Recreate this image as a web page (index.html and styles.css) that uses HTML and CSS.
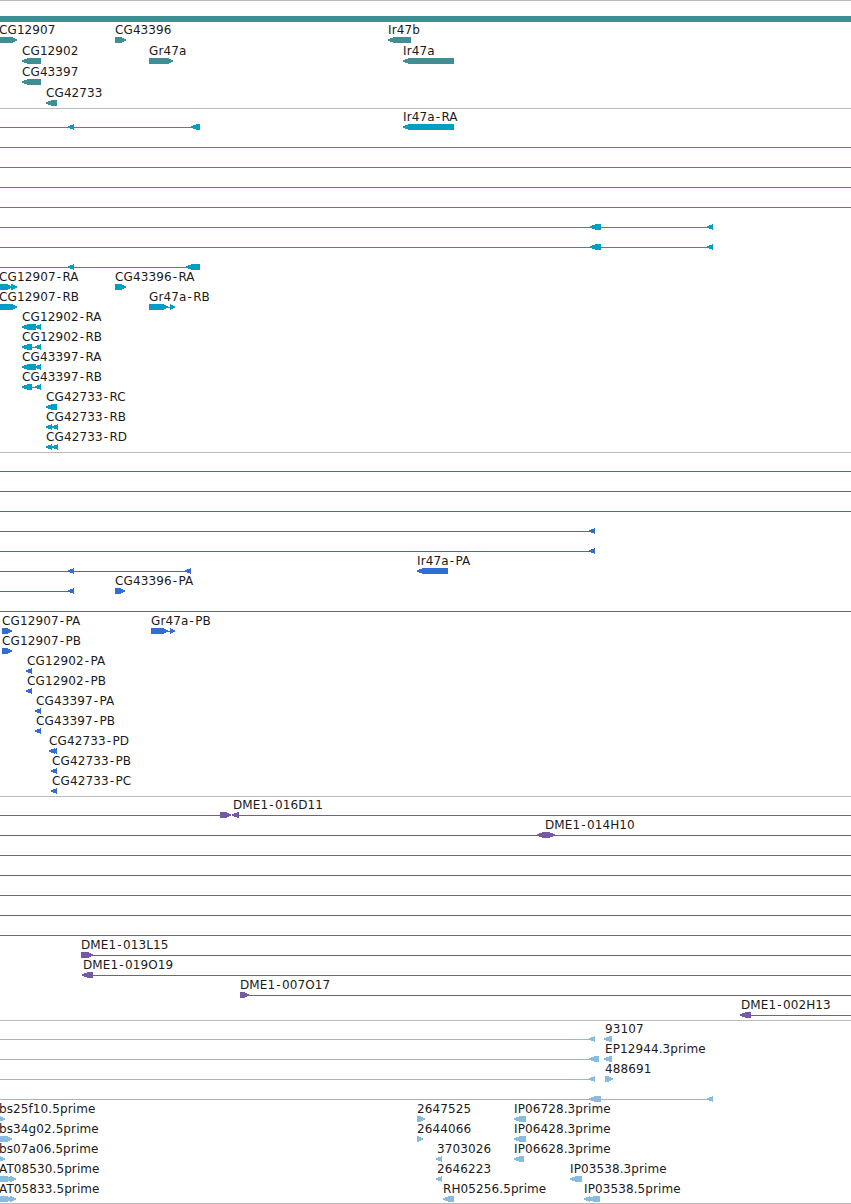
FILE: index.html
```
<!DOCTYPE html>
<html>
  <head>
    <meta charset="utf-8">
    <title>Genome browser</title>
    <link rel="stylesheet" href="styles.css">
  </head>
  <body>
    <main>
      <section class="track genes" id="genes">
        <div class="contig"></div>
      </section>
      <section class="track transcripts" id="transcripts"></section>
      <section class="track proteins" id="proteins"></section>
      <section class="track bacs" id="bacs"></section>
      <section class="track ests" id="ests"></section>
    </main>
    <script src="tracks.js"></script>
  </body>
</html>
```
FILE: styles.css
```
* {
  margin: 0;
  padding: 0;
  box-sizing: border-box;
}
body {
  background-color: white;
  overflow: hidden;
}
main {
  width: 851px;
  height: 1204px;
  border-bottom: 1px solid #bbb;
}
.track {
  display: flex;
  flex-direction: column;
  border-top: 1px solid #bbb;
  padding: 2px 0 1px;
}
.genes {
  color: #3e8e93;
  padding: 15px 0 0;
}
.transcripts {
  color: #009ec0;
}
.proteins {
  color: #316ecf;
}
.bacs {
  color: #7459a8;
}
.ests {
  color: #88bcde;
  padding-bottom: 0;
}
.contig {
  height: 6px;
  margin-bottom: 2px;
  background-color: currentColor;
}
.row {
  display: block;
  width: 851px;
  height: 20px;
  overflow: visible;
}
.genes .row {
  height: 21px;
}
.row path,
.row rect {
  fill: currentColor;
  shape-rendering: crispEdges;
}
.row text {
  fill: #1a1a1a;
  font-family: "DejaVu Sans", sans-serif;
  font-size: 12px;
  letter-spacing: 0.1px;
}
```
FILE: tracks.js
```
const NS = "http://www.w3.org/2000/svg";
const WIDTH = 851;

// one array per row
// ["-", from, to] line, ["<", from, to] / [">", from, to] / ["<>", from, to] arrow,
// ["t", x, label]
const full = [["-", 0, WIDTH]];

const tracks = {
  genes: [
    [["t", -1, "CG12907"], [">", 0, 17], ["t", 115, "CG43396"], [">", 115, 126], ["t", 388, "Ir47b"], ["<", 388, 411]],
    [["t", 22, "CG12902"], ["<", 22, 41], ["t", 149, "Gr47a"], [">", 149, 173], ["t", 403, "Ir47a"], ["<", 403, 454]],
    [["t", 22, "CG43397"], ["<", 22, 41]],
    [["t", 46, "CG42733"], ["<", 46, 57]],
  ],
  transcripts: [
    [["-", 0, 195], ["<", 68, 74], ["<", 191, 200], ["t", 403, "Ir47a-RA"], ["<", 403, 454]],
    full,
    full,
    full,
    full,
    [["-", 0, 710], ["<", 590, 601], ["<", 707, 713]],
    [["-", 0, 710], ["<", 590, 601], ["<", 707, 713]],
    [["-", 0, 190], ["<", 68, 74], ["<", 186, 200]],
    [["t", -1, "CG12907-RA"], [">", 0, 12], [">", 11, 17], ["t", 115, "CG43396-RA"], [">", 115, 126]],
    [["t", -1, "CG12907-RB"], [">", 0, 17], ["t", 149, "Gr47a-RB"], [">", 149, 168], ["-", 165, 172], [">", 170, 175]],
    [["t", 22, "CG12902-RA"], ["<", 22, 36], ["<", 35, 41]],
    [["t", 22, "CG12902-RB"], ["<", 22, 32], ["-", 32, 36], ["<", 35, 41]],
    [["t", 22, "CG43397-RA"], ["<", 22, 36], ["<", 35, 41]],
    [["t", 22, "CG43397-RB"], ["<", 22, 32], ["-", 32, 36], ["<", 35, 41]],
    [["t", 46, "CG42733-RC"], ["<", 46, 57]],
    [["t", 46, "CG42733-RB"], ["<", 46, 52], ["<", 52, 58]],
    [["t", 46, "CG42733-RD"], ["<", 46, 52], ["<", 52, 58]],
  ],
  proteins: [
    full,
    full,
    full,
    [["-", 0, 592], ["<", 589, 595]],
    [["-", 0, 592], ["<", 589, 595]],
    [["-", 0, 188], ["<", 68, 74], ["<", 185, 191], ["t", 417, "Ir47a-PA"], ["<", 417, 448]],
    [["-", 0, 71], ["<", 68, 74], ["t", 115, "CG43396-PA"], [">", 115, 125]],
    full,
    [["t", 2, "CG12907-PA"], [">", 2, 12], ["t", 151, "Gr47a-PB"], [">", 151, 168], ["-", 165, 172], [">", 170, 175]],
    [["t", 2, "CG12907-PB"], [">", 2, 12]],
    [["t", 27, "CG12902-PA"], ["<", 26, 32]],
    [["t", 27, "CG12902-PB"], ["<", 26, 32]],
    [["t", 36, "CG43397-PA"], ["<", 35, 41]],
    [["t", 36, "CG43397-PB"], ["<", 35, 41]],
    [["t", 49, "CG42733-PD"], ["<", 49, 55], ["<", 52, 57]],
    [["t", 52, "CG42733-PB"], ["<", 51, 57]],
    [["t", 52, "CG42733-PC"], ["<", 51, 57]],
  ],
  bacs: [
    [["-", 0, 225], [">", 220, 231], ["t", 233, "DME1-016D11"], ["<", 232, 239], ["-", 236, WIDTH]],
    [["-", 0, WIDTH], ["t", 545, "DME1-014H10"], ["<>", 537, 555]],
    full,
    full,
    full,
    full,
    full,
    [["t", 81, "DME1-013L15"], [">", 81, 93], ["-", 85, WIDTH]],
    [["t", 83, "DME1-019O19"], ["<", 82, 93], ["-", 90, WIDTH]],
    [["t", 240, "DME1-007O17"], [">", 240, 249], ["-", 244, WIDTH]],
    [["t", 741, "DME1-002H13"], ["<", 740, 751], ["-", 748, WIDTH]],
  ],
  ests: [
    [["-", 0, 592], ["<", 589, 595], ["t", 605, "93107"], ["<", 604, 612]],
    [["-", 0, 595], ["<", 589, 599], ["t", 605, "EP12944.3prime"], ["<", 604, 612]],
    [["-", 0, 592], ["<", 589, 595], ["t", 605, "488691"], [">", 605, 613]],
    [["-", 0, 710], ["<", 589, 601], ["<", 707, 713]],
    [["t", -1, "bs25f10.5prime"], [">", -1, 5], ["t", 417, "2647525"], [">", 417, 425], ["t", 514, "IP06728.3prime"], ["<", 514, 526]],
    [["t", -1, "bs34g02.5prime"], [">", 0, 12], ["t", 417, "2644066"], [">", 417, 423], ["t", 514, "IP06428.3prime"], ["<", 514, 526]],
    [["t", -1, "bs07a06.5prime"], [">", -1, 5], ["t", 437, "3703026"], ["<", 436, 442], ["t", 514, "IP06628.3prime"], ["<", 514, 524]],
    [["t", -1, "AT08530.5prime"], [">", 0, 12], [">", 10, 16], ["t", 437, "2646223"], ["<", 436, 442], ["t", 570, "IP03538.3prime"], ["<", 570, 582]],
    [["t", -1, "AT05833.5prime"], [">", 0, 12], [">", 10, 16], ["t", 443, "RH05256.5prime"], ["<", 443, 454], ["t", 584, "IP03538.5prime"], ["<", 584, 590], ["<", 588, 600]],
  ],
};

function add(svg, name, attrs) {
  const el = document.createElementNS(NS, name);
  for (const key in attrs) el.setAttribute(key, attrs[key]);
  svg.appendChild(el);
  return el;
}

// rounded arrow head at x, pointing left (dir 1) or right (dir -1)
function head(x, size, dir) {
  const mid = x + (dir * size) / 2;
  const end = x + dir * size;
  return `${end} 19L${mid} 18L${x} 16.6V15.4L${mid} 14L${end} 13`;
}

function arrow(kind, a, b) {
  const size = Math.min(6, b - a);
  if (kind == "<") return `M${head(a, size, 1)}H${b}V19Z`;
  if (kind == ">") return `M${head(b, size, -1)}H${a}V19Z`;
  return `M${head(a, 7, 1)}H${b - 7}L${b - 3} 14L${b} 15.4V16.6L${b - 3} 18L${b - 7} 19Z`;
}

for (const id in tracks) {
  tracks[id].forEach((row) => {
    const svg = document.createElementNS(NS, "svg");
    svg.setAttribute("class", "row");
    row.forEach(([kind, a, b]) => {
      if (kind == "t") {
        const text = add(svg, "text", { x: a, y: 10 });
        text.textContent = b;
        // a little air on both sides of the hyphen
        const hyphen = b.indexOf("-");
        if (hyphen > 0) {
          const dx = Array(hyphen + 2).fill(0);
          dx[hyphen] = 1;
          dx[hyphen + 1] = 1.3;
          text.setAttribute("dx", dx.join(" "));
        }
      } else if (kind == "-") {
        add(svg, "rect", { x: a, y: 16, width: b - a, height: 1 });
      } else {
        add(svg, "path", { d: arrow(kind, a, b) });
      }
    });
    document.getElementById(id).appendChild(svg);
  });
}
```
